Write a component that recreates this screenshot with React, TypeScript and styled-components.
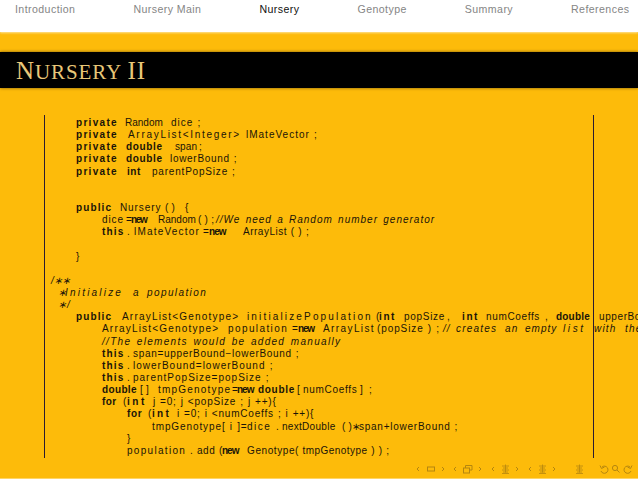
import * as React from "react";
import styled, { createGlobalStyle } from "styled-components";

const GlobalStyle = createGlobalStyle`
  html, body {
    margin: 0;
    padding: 0;
    background: #fdbb0a;
  }
  body {
    width: 638px;
    height: 479px;
    overflow: hidden;
    font-family: "Liberation Sans", Arial, sans-serif;
  }
`;

const Page = styled.div`
  position: relative;
  width: 638px;
  height: 479px;
  overflow: hidden;
  display: flex;
  flex-direction: column;
  background: #fdbb0a;
  box-shadow: inset 0 -1px 0 #fed566;
`;

const NavBar = styled.div`
  height: 32px;
  box-sizing: border-box;
  padding: 3px 15px 0;
  display: flex;
  gap: 58px;
  background: #fff;
  box-shadow: 0 1px 2px rgba(255, 255, 255, 0.6);
`;

const NavItem = styled.span<{ $active?: boolean }>`
  font-size: 10.6px;
  line-height: 13px;
  letter-spacing: 0.42px;
  white-space: nowrap;
  color: ${(p) => (p.$active ? "#111" : "#858585")};
`;

const TitleBand = styled.div`
  margin-top: 20px;
  height: 36px;
  box-sizing: border-box;
  padding-left: 16px;
  background: #000;
  box-shadow: 0 0 3px #7a5a08;
  font-family: "Liberation Serif", serif;
  font-size: 21px;
  line-height: 38px;
  letter-spacing: 0.9px;
  white-space: pre;
  color: #e8c778;
`;

const TitleCap = styled.span`
  font-size: 25px;
`;

const CodeBlock = styled.div`
  margin: 27px 44px 0;
  width: 550px;
  height: 343px;
  box-sizing: border-box;
  border-left: 1px solid #2a1a30;
  border-right: 1px solid #2a1a30;
  padding-top: 2px;
`;

const Line = styled.div<{ $x: number }>`
  height: 12.15px;
  line-height: 12.15px;
  padding-left: ${(p) => p.$x - 45}px;
  font-size: 10px;
  white-space: nowrap;
  color: #1a1408;
`;

const Cell = styled.span<{ $w?: number; $ls: number }>`
  display: inline-block;
  width: ${(p) => (p.$w ? `${p.$w}px` : "auto")};
  letter-spacing: ${(p) => p.$ls}px;
  white-space: pre;
`;

const Kw = styled(Cell)`
  font-weight: bold;
`;

const Tx = styled(Cell)`
  word-spacing: 0.5px;
`;

const Cm = styled(Cell)`
  font-style: italic;
  word-spacing: 1.5px;
`;

const NavSymbols = styled.svg`
  position: absolute;
  left: 410px;
  top: 458px;
  width: 228px;
  height: 21px;
  fill: none;
  stroke: #b5860f;
  stroke-width: 1;
`;

// kind, text, width up to the next token, letter spacing
type Tok = [string, string, number?, number?];

const kwSpacing: Record<string, number> = {
  private: 1.3,
  double: 0.65,
  public: 1.1,
  int: 0.5,
  new: -1.3,
  this: 1.2,
  for: 0.35,
};

const lines: { x: number; tokens: Tok[] }[] = [
  { x: 76, tokens: [["k", "private", 49], ["t", "Random", 46, 0], ["t", "dice ;", 0, 1]] },
  { x: 76, tokens: [["k", "private", 52], ["t", "ArrayList<Integer>", 118, 1.7], ["t", "lMateVector ;", 0, 1]] },
  { x: 76, tokens: [["k", "private", 50], ["k", "double", 49], ["t", "span", 24, 0.1], ["t", ";"]] },
  { x: 76, tokens: [["k", "private", 50], ["k", "double", 44], ["t", "lowerBound ;", 0, 0.7]] },
  { x: 76, tokens: [["k", "private", 51], ["k", "int", 25], ["t", "parentPopSize ;", 0, 0.8]] },
  { x: 76, tokens: [] },
  { x: 76, tokens: [] },
  { x: 76, tokens: [["k", "public", 44], ["t", "Nursery", 45], ["t", "( )", 20, 0], ["t", "{"]] },
  { x: 102, tokens: [["t", "dice", 24], ["t", "=", 5, 0], ["k", "new", 27], ["t", "Random", 40, 0], ["t", "( ) ;", 18, 0], ["c", "//We need a Random number generator"]] },
  { x: 102, tokens: [["k", "this", 25], ["t", ".", 7], ["t", "lMateVector", 69, 1.2], ["t", "=", 6, 0], ["k", "new", 34, -0.9], ["t", "ArrayList ( ) ;", 0, 0.5]] },
  { x: 76, tokens: [] },
  { x: 76, tokens: [["t", "}"]] },
  { x: 76, tokens: [] },
  { x: 51, tokens: [["c", "/∗∗", 0, 0.2]] },
  { x: 58, tokens: [["c", "∗", 7, 0], ["c", "Initialize", 68, 2.2], ["c", "a", 14], ["c", "population", 0, 1.4]] },
  { x: 58, tokens: [["c", "∗/"]] },
  {
    x: 76,
    tokens: [
      ["k", "public", 46],
      ["t", "ArrayList<Genotype>", 125, 1.2],
      ["t", "initializePopulation", 129, 2.15],
      ["t", "(", 3, 0],
      ["k", "int", 25, 1.6],
      ["t", "popSize", 43, 0.7],
      ["t", ",", 15],
      ["k", "int", 24, 1.6],
      ["t", "numCoeffs", 59, 0.65],
      ["t", ",", 11],
      ["k", "double", 43, 0.2],
      ["t", "upperBound", 0, 0.6],
    ],
  },
  {
    x: 102,
    tokens: [
      ["t", "ArrayList<Genotype>", 126, 1.2],
      ["t", "population", 64, 1.4],
      ["t", "=", 6, 0],
      ["k", "new", 25, -1.2],
      ["t", "ArrayList", 54, 1.4],
      ["t", "(popSize ) ;", 66],
      ["c", "//", 13],
      ["c", "creates", 49, 1.2],
      ["c", "an", 20, 1.2],
      ["c", "empty", 38, 1],
      ["c", "list", 31, 2.6],
      ["c", "with", 31, 1.2],
      ["c", "the", 0, 1.2],
    ],
  },
  { x: 102, tokens: [["c", "//The elements would be added manually", 0, 1.3]] },
  { x: 102, tokens: [["k", "this", 25], ["t", ".", 6], ["t", "span=upperBound−lowerBound ;", 0, 0.7]] },
  { x: 102, tokens: [["k", "this", 25], ["t", ".", 6], ["t", "lowerBound=lowerBound ;", 0, 1]] },
  { x: 102, tokens: [["k", "this", 25], ["t", ".", 6], ["t", "parentPopSize=popSize ;", 0, 1]] },
  {
    x: 102,
    tokens: [
      ["k", "double", 38, 0.35],
      ["t", "[ ]", 18, 0],
      ["t", "tmpGenotype", 74, 1.2],
      ["t", "=", 5, 0],
      ["k", "new", 21, -1],
      ["k", "double", 39, 0.7],
      ["t", "[", 6],
      ["t", "numCoeffs", 57, 0.7],
      ["t", "] ;", 0, 1.5],
    ],
  },
  { x: 102, tokens: [["k", "for", 21], ["t", "(", 4, 0], ["k", "int", 26, 2.5], ["t", "j =0; j <popSize ; j ++){", 0, 0.8]] },
  { x: 127, tokens: [["k", "for", 21, 0.6], ["t", "(", 4, 0], ["k", "int", 25, 2.3], ["t", "i =0; i <numCoeffs ; i ++){", 0, 0.8]] },
  {
    x: 152,
    tokens: [
      ["t", "tmpGenotype", 70],
      ["t", "[ i ]=", 25],
      ["t", "dice .", 35, 1.5],
      ["t", "nextDouble", 60, 0.3],
      ["t", "( )", 10, 0],
      ["t", "∗", 7, 0],
      ["t", "span+lowerBound ;", 0, 0.75],
    ],
  },
  { x: 127, tokens: [["t", "}"]] },
  {
    x: 127,
    tokens: [
      ["t", "population", 63, 1.3],
      ["t", ". add (", 32, 0.5],
      ["k", "new", 25, -1],
      ["t", "Genotype", 48, 0.6],
      ["t", "( tmpGenotype ) ) ;", 0, 0.45],
    ],
  },
];

const CodeToken = (props: { tok: Tok }) => {
  const [kind, text, w, ls] = props.tok;
  if (kind === "k") {
    return <Kw $w={w} $ls={ls ?? kwSpacing[text] ?? 1}>{text}</Kw>;
  }
  if (kind === "c") {
    return <Cm $w={w} $ls={ls ?? 1}>{text}</Cm>;
  }
  return <Tx $w={w} $ls={ls ?? 0.9}>{text}</Tx>;
};

// the little triangles either side of each beamer navigation symbol
const Arrows = (props: { left: number; right: number }) => (
  <>
    <path d={`M${props.left + 2} 9 L${props.left} 11 L${props.left + 2} 13`} />
    <path d={`M${props.right} 9 L${props.right + 2} 11 L${props.right} 13`} />
  </>
);

const Stack = (props: { x: number }) => (
  <path
    d={`M${props.x} 8 h7 M${props.x + 1} 10 h5 M${props.x} 12 h7 M${props.x + 1} 14 h5 M${props.x} 15.5 h7 M${props.x + 3.5} 6.5 v8`}
    strokeWidth="0.8"
  />
);

export default function App() {
  return (
    <Page>
      <GlobalStyle />
      <NavBar>
        <NavItem>Introduction</NavItem>
        <NavItem>Nursery Main</NavItem>
        <NavItem $active>Nursery</NavItem>
        <NavItem>Genotype</NavItem>
        <NavItem>Summary</NavItem>
        <NavItem>References</NavItem>
      </NavBar>
      <TitleBand>
        <TitleCap>N</TitleCap>URSERY <TitleCap>II</TitleCap>
      </TitleBand>
      <CodeBlock>
        {lines.map((line, i) => (
          <Line key={i} $x={line.x}>
            {line.tokens.map((t, j) => (
              <CodeToken key={j} tok={t} />
            ))}
          </Line>
        ))}
      </CodeBlock>
      <NavSymbols viewBox="0 0 228 21">
        <Arrows left={7} right={32} />
        <rect x="17.5" y="9" width="7" height="4" />
        <Arrows left={44} right={69} />
        <rect x="53.5" y="10" width="6" height="5" />
        <path d="M55.5 10 V7.5 H62 V12 H59.5" />
        <Arrows left={82} right={106} />
        <Stack x={92} />
        <Arrows left={119} right={143} />
        <Stack x={129} />
        <Stack x={166} />
        <path d="M192 9 A3.6 3.6 0 1 1 191 13 M190 7.5 L191.5 10.5 L194.5 9" />
        <circle cx="205" cy="10" r="2.6" />
        <path d="M207 12 L209.5 14.5" />
        <path d="M220 9 A3.6 3.6 0 1 0 221 13 M222 7.5 L220.5 10.5 L217.5 9" />
      </NavSymbols>
    </Page>
  );
}
